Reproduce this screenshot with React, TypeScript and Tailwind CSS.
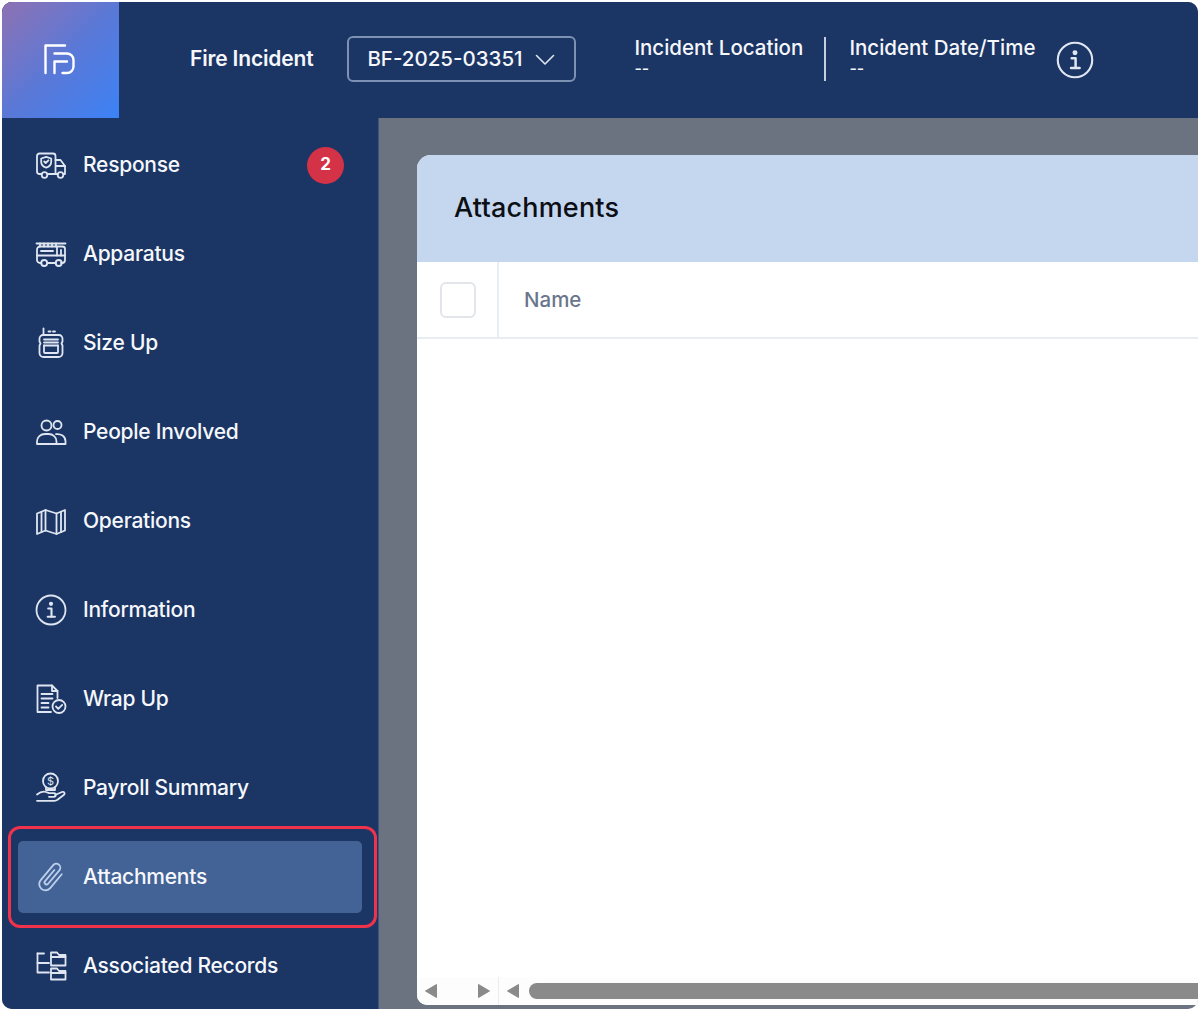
import React from 'react';

const stroke = { fill: 'none', stroke: 'currentColor', strokeWidth: 1.8, strokeLinecap: 'round', strokeLinejoin: 'round' } as const;

const ResponseIcon = () => (
  <svg viewBox="0 0 32 32" className="w-8 h-8" {...stroke}>
    <path d="M6.500 25H4.500A2.500 2.500 0 0 1 2 22.500V7a2.500 2.500 0 0 1 2.500-2.500H18A2.500 2.500 0 0 1 20.500 7v18H12.500" />
    <path d="M20.500 11h5l4.500 6v8h-1.500" />
    <path d="M20.500 25H23" />
    <path d="M21 17h9" />
    <circle cx="9.500" cy="26" r="2.800" />
    <circle cx="25.500" cy="26" r="2.800" />
    <path d="M11.200 7.800l5 1.700v3.500c0 3-2.200 4.700-5 5.700-2.800-1-5-2.700-5-5.700V9.500z" />
    <path d="M9.200 12.500l1.500 1.500 2.700-2.700" />
  </svg>
);

const ApparatusIcon = () => (
  <svg viewBox="0 0 32 32" className="w-8 h-8" {...stroke}>
    <path d="M1.500 5.500h29" />
    <path d="M5 5.500v3M9 5.500v3M13 5.500v3M17 5.500v3M21 5.500v3" />
    <path d="M6.500 25H5a3 3 0 0 1-3-3V11.500a3 3 0 0 1 3-3h22.500a2.500 2.500 0 0 1 2.500 2.500V22a3 3 0 0 1-3 3h-1" />
    <path d="M12 25h9" />
    <path d="M2 17.500h28" />
    <path d="M6 13h12" />
    <path d="M22 9v8.500M26 12v5.500" />
    <circle cx="9.200" cy="25" r="3" />
    <circle cx="23.700" cy="25" r="3" />
  </svg>
);

const SizeUpIcon = () => (
  <svg viewBox="0 0 32 32" className="w-8 h-8" {...stroke}>
    <path d="M8.500 8V1.500" />
    <path d="M13.500 4.500h2M18 4.500h2" />
    <path d="M8 8h16a3.500 3.500 0 0 1 3.500 3.500v3l-1 2 1 2V26a4 4 0 0 1-4 4H8.500a4 4 0 0 1-4-4v-7.500l1-2-1-2v-3A3.500 3.500 0 0 1 8 8z" />
    <path d="M9 12.500h14M9 15.500h14M9 18.500h14" />
    <path d="M9 18.500V25a1 1 0 0 0 1 1h12a1 1 0 0 0 1-1v-6.500" />
  </svg>
);

const PeopleIcon = () => (
  <svg viewBox="0 0 32 32" className="w-8 h-8" {...stroke}>
    <circle cx="11.500" cy="9.500" r="5" />
    <circle cx="22.500" cy="9" r="4" />
    <path d="M2 28v-2.500C2 21 5.500 18 10 18h3.500c4.500 0 8 3 8 7.500V28z" />
    <path d="M21 18.200c4.800-.700 9.500 2.100 9.500 7V28h-9" />
  </svg>
);

const OperationsIcon = () => (
  <svg viewBox="0 0 32 32" className="w-8 h-8" {...stroke}>
    <path d="M2 8.500l8.500-3.500 11 3.500L30 5v20.500L21.500 29l-11-3.500L2 29z" />
    <path d="M10.500 5v20.500" />
    <path d="M21.500 8.500V29" />
    <path d="M6.500 7v20M26 7v20" />
  </svg>
);

const InfoIcon = ({ className = 'w-8 h-8' }: { className?: string }) => (
  <svg viewBox="0 0 32 32" className={className} {...stroke}>
    <circle cx="16" cy="16" r="14.500" />
    <circle cx="16" cy="9.800" r="1.200" fill="currentColor" />
    <path d="M13.200 14.500H16.500V22.500" strokeWidth="2.100" />
    <path d="M12.700 22.800h7.200" strokeWidth="2.100" />
  </svg>
);

const WrapUpIcon = () => (
  <svg viewBox="0 0 32 32" className="w-8 h-8" {...stroke}>
    <path d="M16 29H2.500V2.500h14.500l5.500 5.500v7" />
    <path d="M17 2.500V8h5.500" />
    <path d="M6.500 11h11M6.500 15.500h11M6.500 20h7M6.500 24.500h7" />
    <circle cx="24" cy="23.500" r="6.500" />
    <path d="M21 23.500l2.300 2.300 3.900-3.900" />
  </svg>
);

const PayrollIcon = () => (
  <svg viewBox="0 0 32 32" className="w-8 h-8" {...stroke}>
    <circle cx="15.500" cy="9" r="7.500" />
    <text x="15.500" y="13" textAnchor="middle" fontSize="11" fontFamily="Inter, sans-serif" fill="currentColor" stroke="none">$</text>
    <path d="M11 15.500v2.500h9v-2.500" />
    <path d="M2 22.500c3-2.500 6-3.500 9-2.500l3 1.200h5a1.800 1.800 0 0 1 0 3.600h-5" />
    <path d="M20 23l7-3c2-.700 3.500 1.300 2 2.800l-6.500 5c-1 .700-2 1-3 1H2" />
  </svg>
);

const ClipIcon = () => (
  <svg viewBox="0 0 32 32" className="w-8 h-8" fill="none" stroke="#bcd0ec" strokeWidth="1.800" strokeLinecap="round" strokeLinejoin="round">
    <path d="M22.500 7V25a6.200 6.200 0 0 1-12.400 0V5.500a4 4 0 0 1 8 0V23a2 2 0 0 1-4 0V8.500" transform="rotate(40 16 16)" />
  </svg>
);

const RecordsIcon = () => (
  <svg viewBox="0 0 32 32" className="w-8 h-8" {...stroke}>
    <path d="M2.500 3.500v19H14" />
    <path d="M2.500 3.500H9" />
    <path d="M2.500 13H14" />
    <path d="M16 2.500h6l2 2.500h6.500V15.500H16z" />
    <path d="M16 18.500h6l2 2.500h6.500v8.500H16z" />
    <path d="M16 7h14.500M16 23h14.500" />
  </svg>
);

const items: { label: string; icon: React.ReactNode; badge?: number; active?: boolean }[] = [
  { label: 'Response', icon: <ResponseIcon />, badge: 2 },
  { label: 'Apparatus', icon: <ApparatusIcon /> },
  { label: 'Size Up', icon: <SizeUpIcon /> },
  { label: 'People Involved', icon: <PeopleIcon /> },
  { label: 'Operations', icon: <OperationsIcon /> },
  { label: 'Information', icon: <InfoIcon /> },
  { label: 'Wrap Up', icon: <WrapUpIcon /> },
  { label: 'Payroll Summary', icon: <PayrollIcon /> },
  { label: 'Attachments', icon: <ClipIcon />, active: true },
  { label: 'Associated Records', icon: <RecordsIcon /> },
];

const NavItem = ({ item }: { item: (typeof items)[number] }) => (
  <div className={`relative h-[72px] shrink-0 flex items-center pl-[17px] pr-[18px] rounded-[5px] ${item.active ? 'bg-[#436296]' : ''}`}>
    <span className="w-8 h-8 text-[#dfe6f1] shrink-0">{item.icon}</span>
    <span className="ml-[16px] text-[21px] font-medium text-[#f5f7fb] tracking-[-0.26px] whitespace-nowrap">{item.label}</span>
    {item.badge !== undefined && (
      <span className="ml-auto w-[37px] h-[37px] rounded-full bg-[#d43246] text-white text-[17px] font-bold flex items-center justify-center">
        {item.badge}
      </span>
    )}
    {item.active && (
      <span className="absolute -left-[10px] -right-[15px] -top-[15px] -bottom-[15px] border-[3px] border-[#f0324a] rounded-[12px]" />
    )}
  </div>
);

const Triangle = ({ dir }: { dir: 'left' | 'right' }) => (
  <svg viewBox="0 0 14 16" className="w-[14px] h-[16px] text-[#8a8a8a]">
    <path d={dir === 'left' ? 'M12.500 1.500V14.500L1.500 8z' : 'M1.500 1.500V14.500L12.500 8z'} fill="currentColor" stroke="currentColor" strokeLinejoin="round" />
  </svg>
);

export default function App() {
  return (
    <div className="w-[1200px] h-[1012px] bg-white p-[2px] overflow-hidden" style={{ fontFamily: 'Inter, "Liberation Sans", sans-serif' }}>
      <div className="w-full h-[1007px] rounded-[10px] overflow-hidden flex flex-col bg-[#6b7280]">
        <header className="h-[116px] shrink-0 bg-[#1b3564] flex items-center text-[#f5f7fb]">
          <div className="w-[117px] h-full shrink-0 bg-gradient-to-br from-[#8d71b3] via-[#5a78d6] to-[#3a82f6] flex items-center justify-center">
            <svg viewBox="0 0 32 32" className="w-[32px] h-[32px] mr-[3px] mb-[3px]" fill="none" stroke="#fff" strokeWidth="2.400" strokeLinecap="round" strokeLinejoin="round">
              <path d="M2.500 30V2.500H22" />
              <path d="M11.500 30V18.500H24" />
              <path d="M11.500 10.500H24a6.500 6.500 0 0 1 6.500 6.500v6.500A6.500 6.500 0 0 1 24 30h-4.500" />
            </svg>
          </div>
          <span className="ml-[71px] mb-[2px] text-[21px] font-semibold tracking-[-0.17px] whitespace-nowrap">Fire Incident</span>
          <div className="ml-[34px] mb-[2px] w-[229px] h-[46px] border-2 border-[#7d91b3] rounded-[6px] flex items-center pl-[18px]">
            <span className="text-[20.5px] font-medium whitespace-nowrap">BF-2025-03351</span>
            <svg viewBox="0 0 20 12" className="w-[20px] h-[12px] ml-[12px] mt-[2px]" fill="none" stroke="#dfe6f1" strokeWidth="1.600" strokeLinecap="round" strokeLinejoin="round">
              <path d="M1.500 1.500L10 10l8.500-8.500" />
            </svg>
          </div>
          <div className="ml-[58px] w-[169px] flex flex-col mb-[8px]">
            <span className="text-[20.5px] font-medium whitespace-nowrap leading-[24px]">Incident Location</span>
            <span className="text-[16px] font-medium leading-[17px]">--</span>
          </div>
          <div className="ml-[21px] mb-[2px] w-[2px] h-[44px] bg-[#c5cfdf]" />
          <div className="ml-[23px] w-[186px] flex flex-col mb-[8px]">
            <span className="text-[20.5px] font-medium whitespace-nowrap leading-[24px]">Incident Date/Time</span>
            <span className="text-[16px] font-medium leading-[17px]">--</span>
          </div>
          <span className="ml-[21px] text-[#dfe6f1]">
            <InfoIcon className="w-[38px] h-[38px]" />
          </span>
        </header>

        <div className="flex-1 flex min-h-0">
          <aside className="w-[377px] shrink-0 bg-[#1b3564] pt-[11px] pl-[16px] pr-[16px] flex flex-col gap-[17px] border-r border-[#3d5680]">
            {items.map((item) => (
              <NavItem key={item.label} item={item} />
            ))}
          </aside>

          <main className="flex-1 min-w-0 pt-[37px] pl-[38px] pb-[4px]">
            <div className="h-full bg-white rounded-tl-[14px] rounded-bl-[10px] overflow-hidden flex flex-col">
              <div className="h-[107px] shrink-0 bg-[#c5d6ef] flex items-center pl-[37px]">
                <h1 className="text-[27px] font-medium text-[#0c0f14] tracking-[0.2px]">Attachments</h1>
              </div>
              <div className="h-[77px] shrink-0 flex border-b-2 border-[#e8edf4]">
                <div className="w-[82px] shrink-0 border-r-2 border-[#e8edf4] flex items-center justify-center">
                  <div className="w-[36px] h-[36px] rounded-[6px] border-2 border-[#e2e5ea] ml-[2px] mt-[1px]" />
                </div>
                <div className="flex items-center pl-[25px] pt-[1px] text-[20.5px] font-medium text-[#69768c]">Name</div>
              </div>
              <div className="flex-1" />
              <div className="h-[28px] shrink-0 flex items-center bg-[#fdfdfe]">
                <div className="w-[82px] h-full shrink-0 flex items-center justify-between px-[7px] border-r border-[#e8edf4]">
                  <Triangle dir="left" />
                  <Triangle dir="right" />
                </div>
                <div className="flex-1 flex items-center pl-[7px] gap-[9px] min-w-0">
                  <Triangle dir="left" />
                  <div className="flex-1 h-[16px] bg-[#8a8a8a] rounded-l-full" />
                </div>
              </div>
            </div>
          </main>
        </div>
      </div>
    </div>
  );
}
